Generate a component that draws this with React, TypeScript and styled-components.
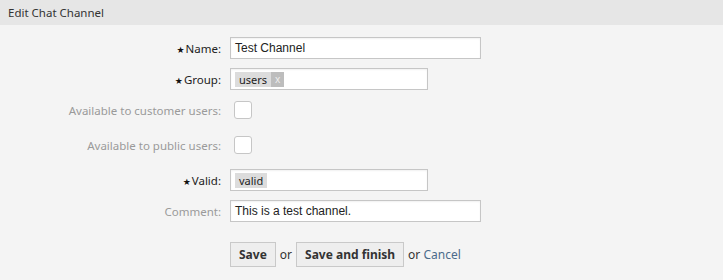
import styled, { createGlobalStyle } from "styled-components";

const GlobalStyle = createGlobalStyle`
  html, body {
    margin: 0;
    padding: 0;
    background: #f4f4f4;
  }
  body {
    font-family: "Noto Sans", "Open Sans", sans-serif;
  }
`;

const Page = styled.div`
  width: 723px;
  height: 280px;
  background: #f4f4f4;
  overflow: hidden;
`;

const Header = styled.div`
  height: 25px;
  display: flex;
  align-items: center;
  padding: 0 8px;
  background: #e6e6e6;
  color: #333;
  font-size: 11.5px;
`;

const Form = styled.div`
  display: flex;
  flex-direction: column;
  padding-top: 12px;
`;

const Row = styled.div<{ $gap?: number }>`
  display: grid;
  grid-template-columns: 221px 1fr;
  column-gap: 9px;
  align-items: center;
  height: 22px;
  margin-top: ${(p) => p.$gap ?? 0}px;
`;

const Label = styled.label<{ $required?: boolean }>`
  display: flex;
  justify-content: flex-end;
  align-items: center;
  font-size: 11.5px;
  color: ${(p) => (p.$required ? "#222" : "#9a9a9a")};
  white-space: nowrap;
`;

const Star = styled.span`
  font-family: "DejaVu Sans", sans-serif;
  font-size: 9px;
  margin-right: 1px;
  margin-top: 4px;
  color: #111;
`;

const TextInput = styled.div<{ $width: number }>`
  box-sizing: border-box;
  width: ${(p) => p.$width}px;
  height: 22px;
  background: #fff;
  border: 1px solid #c6c6c6;
  box-shadow: inset 0 1px 2px rgba(0, 0, 0, 0.06);
  display: flex;
  align-items: center;
  padding: 0 4px;
  font-family: "Liberation Sans", Arial, sans-serif;
  font-size: 12px;
  color: #222;
`;

const Tag = styled.span`
  display: inline-flex;
  align-items: stretch;
  height: 15px;
  background: #dcdcdc;
  color: #222;
  font-family: "Noto Sans", "Open Sans", sans-serif;
  font-size: 11px;
  line-height: 15px;
`;

const TagText = styled.span`
  padding: 0 4px;
`;

const TagRemove = styled.span`
  background: #bdbdbd;
  color: #eee;
  padding: 0 4px;
  font-size: 10px;
`;

const Checkbox = styled.span`
  box-sizing: border-box;
  margin-left: 4px;
  width: 18px;
  height: 18px;
  background: #fff;
  border: 1px solid #c6c6c6;
  border-radius: 3px;
`;

const Actions = styled.div`
  display: flex;
  align-items: center;
  margin-top: 20px;
  padding-left: 230px;
  gap: 4px;
  font-size: 12px;
  color: #333;
`;

const Button = styled.button`
  box-sizing: border-box;
  height: 25px;
  padding: 0 8px;
  border: 1px solid #c9c9c9;
  background: #eeeeee;
  color: #333;
  font-family: "Noto Sans", "Open Sans", sans-serif;
  font-weight: bold;
  font-size: 12px;
`;

const CancelLink = styled.a`
  color: #4b6b8b;
  text-decoration: none;
`;

export default function App() {
  return (
    <Page>
      <GlobalStyle />
      <Header>Edit Chat Channel</Header>
      <Form>
        <Row>
          <Label $required>
            <Star>★</Star>Name:
          </Label>
          <TextInput $width={251}>Test Channel</TextInput>
        </Row>
        <Row $gap={9}>
          <Label $required>
            <Star>★</Star>Group:
          </Label>
          <TextInput $width={198}>
            <Tag>
              <TagText>users</TagText>
              <TagRemove>x</TagRemove>
            </Tag>
          </TextInput>
        </Row>
        <Row $gap={9}>
          <Label>Available to customer users:</Label>
          <Checkbox />
        </Row>
        <Row $gap={13}>
          <Label>Available to public users:</Label>
          <Checkbox />
        </Row>
        <Row $gap={13}>
          <Label $required>
            <Star>★</Star>Valid:
          </Label>
          <TextInput $width={198}>
            <Tag>
              <TagText>valid</TagText>
            </Tag>
          </TextInput>
        </Row>
        <Row $gap={9}>
          <Label>Comment:</Label>
          <TextInput $width={251}>This is a test channel.</TextInput>
        </Row>
        <Actions>
          <Button>Save</Button>
          <span>or</span>
          <Button>Save and finish</Button>
          <span>
            or <CancelLink href="#">Cancel</CancelLink>
          </span>
        </Actions>
      </Form>
    </Page>
  );
}
